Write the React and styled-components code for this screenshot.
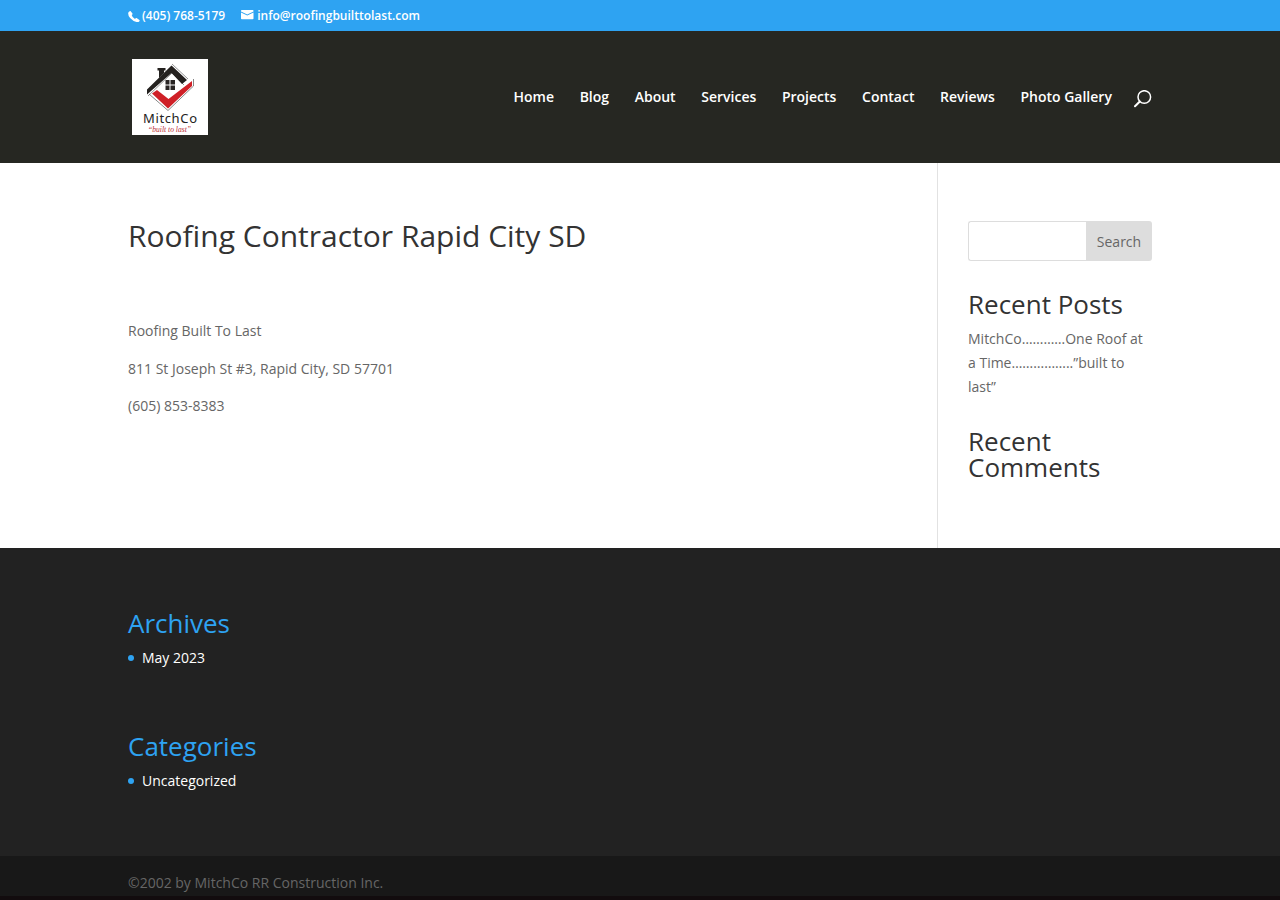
import styled, { createGlobalStyle } from 'styled-components'

const GlobalStyle = createGlobalStyle`
    * {
        box-sizing: border-box;
    }

    body {
        margin: 0;
        height: 900px;
        overflow: hidden;
        background: #fff;
        color: #666;
        font-family: 'Open Sans', Arial, sans-serif;
        font-size: 14px;
        line-height: 24px;
        -webkit-font-smoothing: antialiased;
    }

    a {
        color: inherit;
        text-decoration: none;
    }
`

const Container = styled.div`
    width: 1024px;
    margin: 0 auto;
`

const TopBar = styled.div`
    height: 31px;
    background: #2ea3f2;
    color: #fff;
    font-size: 12px;
    font-weight: 600;
    line-height: 12px;
`

const ContactInfo = styled(Container)`
    display: flex;
    gap: 16px;
    padding-top: 10px;
`

const ContactItem = styled.a`
    display: flex;
    gap: ${props => props.$gap}px;

    svg {
        display: block;
        flex: none;
    }
`

const HeaderWrapper = styled.header`
    height: 132px;
    background: #262722;
`

const HeaderInner = styled(Container)`
    display: flex;
    align-items: center;
    justify-content: space-between;
    height: 132px;
    padding-left: 4px;
`

const LogoSvg = styled.svg`
    display: block;
    width: 76px;
    height: 76px;
    background: #fff;
`

const Nav = styled.nav`
    display: flex;
    align-items: center;
    gap: 25.64px;
    color: #fff;
    font-weight: 600;
    line-height: 14px;
`

const SearchIcon = styled.svg`
    display: block;
    margin: 3px 0 0 -3.5px;
`

const Main = styled(Container)`
    display: flex;
    height: 385px;
`

const Content = styled.main`
    width: 809px;
    padding-top: 58px;

    p {
        margin: 0 0 13.6px;
    }
`

const PageTitle = styled.h1`
    margin: 0 0 68px;
    color: #333;
    font-size: 30px;
    font-weight: 500;
    line-height: 30px;
`

const Sidebar = styled.aside`
    width: 215px;
    padding: 58px 0 0 30px;
    border-left: 1px solid #e2e2e2;
`

const SearchForm = styled.form`
    display: flex;
    height: 40px;
    margin-bottom: 30px;
`

const SearchInput = styled.input`
    width: 118px;
    height: 40px;
    padding: 0 8px;
    border: 1px solid #ddd;
    border-right: 0;
    border-radius: 3px 0 0 3px;
    background: #fff;
    outline: 0;
`

const SearchButton = styled.button`
    width: 66px;
    padding: 2px 0 0;
    border: 0;
    border-radius: 0 3px 3px 0;
    background: #ddd;
    color: #666;
    font: inherit;
`

const WidgetTitle = styled.h4`
    margin: 0;
    padding-bottom: 10px;
    color: ${props => props.$color || '#333'};
    font-size: 26px;
    font-weight: 500;
    line-height: 26px;
`

const RecentPost = styled.div`
    margin-bottom: 29px;
`

const Footer = styled.footer`
    height: 352px;
    background: #222;
`

const FooterWidgets = styled(Container)`
    height: 308px;
    padding-top: 62px;
`

const FooterWidget = styled.section`
    height: 123px;
`

const FooterList = styled.ul`
    margin: 0;
    padding: 0;
    list-style: none;
    color: #fff;

    li {
        display: flex;
        align-items: center;
        gap: 8px;
    }

    li::before {
        content: '';
        width: 6px;
        height: 6px;
        border-radius: 50%;
        background: #2ea3f2;
    }
`

const FooterBottom = styled.div`
    height: 44px;
    padding-top: 15px;
    border-bottom: 4px solid #120c0e;
    background: #181818;
`

const menu = ['Home', 'Blog', 'About', 'Services', 'Projects', 'Contact', 'Reviews', 'Photo Gallery']

const footerWidgets = [
    { title: 'Archives', items: ['May 2023'] },
    { title: 'Categories', items: ['Uncategorized'] },
]

const Logo = () => (
    <LogoSvg viewBox="0 0 76 76">
        <path d="M16 37L40 14L52 26M40 5L56 20" fill="none" stroke="#666" strokeWidth="0.7" />
        <path d="M15 30.500L39.500 6.500L55 21L50 25L39.500 14L15 35.500Z" fill="#24211f" />
        <path d="M27 19V11.500H25.500V9H33.500V11.500H32V14Z" fill="#24211f" />
        <path d="M20 34.500L25 31L36.500 40L60 22V27L36 49.500Z" fill="#cf2027" />
        <path d="M17 35L36 51.500L61.500 27V20" fill="none" stroke="#555" strokeWidth="0.7" />
        <path d="M33.500 21H37.500V25.500H33.500ZM38.500 21H43V25.500H38.500ZM33.500 26.500H37.500V31H33.500ZM38.500 26.500H43V31H38.500Z" fill="#292524" />
        <text x="11" y="64" textLength="54" fontFamily="'Noto Sans', sans-serif" fontSize="13" fill="#222">MitchCo</text>
        <text x="16" y="72.500" textLength="43" lengthAdjust="spacingAndGlyphs" fontFamily="'Liberation Serif', serif" fontStyle="italic" fontSize="7.500" fill="#b92c35">“built to last”</text>
    </LogoSvg>
)

const App = () => (
    <>
        <GlobalStyle />
        <TopBar>
            <ContactInfo>
                <ContactItem $gap={2} href="#phone">
                    <svg width="12" height="12" viewBox="0 0 12 12">
                        <path d="M2.700 1.200L4.600 3.800Q4.700 4.500 3.700 5.100Q4.200 7.700 7 8.900Q7.900 7.800 8.600 8.100L11.400 9.900Q12 10.400 11.200 11.400Q10.400 12.200 8.500 11.900Q4.900 11.200 2.100 8Q0 5.600 .2 3Q.4 1.800 1.700 1.200Q2.300 .8 2.700 1.200Z" fill="#fff" />
                    </svg>
                    <span>(405) 768-5179</span>
                </ContactItem>
                <ContactItem $gap={3} href="#email">
                    <svg width="13" height="12" viewBox="0 0 13 12">
                        <path d="M.8 0H11.700Q12.500 0 12.500 .8V1.500L6.250 4.500L0 1.500V.8Q0 0 .8 0ZM0 2.600L6.250 5.600L12.500 2.600V8.500Q12.500 9.300 11.700 9.300H.8Q0 9.300 0 8.500Z" fill="#fff" />
                    </svg>
                    <span>info@roofingbuilttolast.com</span>
                </ContactItem>
            </ContactInfo>
        </TopBar>
        <HeaderWrapper>
            <HeaderInner>
                <Logo />
                <Nav>
                    {menu.map(item => <a key={item} href="#menu">{item}</a>)}
                    <SearchIcon width="18" height="18" viewBox="0 0 18 18" fill="none" stroke="#fff">
                        <circle cx="10.300" cy="7" r="6.300" strokeWidth="1.500" />
                        <path d="M5.800 11.500L1 16.300" strokeWidth="2" strokeLinecap="round" />
                    </SearchIcon>
                </Nav>
            </HeaderInner>
        </HeaderWrapper>
        <Main>
            <Content>
                <PageTitle>Roofing Contractor Rapid City SD</PageTitle>
                <p>Roofing Built To Last</p>
                <p>811 St Joseph St #3, Rapid City, SD 57701</p>
                <p>(605) 853-8383</p>
            </Content>
            <Sidebar>
                <SearchForm>
                    <SearchInput aria-label="Search" />
                    <SearchButton type="button">Search</SearchButton>
                </SearchForm>
                <WidgetTitle>Recent Posts</WidgetTitle>
                <RecentPost>
                    <a href="#post">MitchCo…………One Roof at a Time……………..”built to last”</a>
                </RecentPost>
                <WidgetTitle>Recent Comments</WidgetTitle>
            </Sidebar>
        </Main>
        <Footer>
            <FooterWidgets>
                {footerWidgets.map(({ title, items }) => (
                    <FooterWidget key={title}>
                        <WidgetTitle $color="#2ea3f2">{title}</WidgetTitle>
                        <FooterList>
                            {items.map(item => <li key={item}>{item}</li>)}
                        </FooterList>
                    </FooterWidget>
                ))}
            </FooterWidgets>
            <FooterBottom>
                <Container>©2002 by MitchCo RR Construction Inc.</Container>
            </FooterBottom>
        </Footer>
    </>
)

export default App
